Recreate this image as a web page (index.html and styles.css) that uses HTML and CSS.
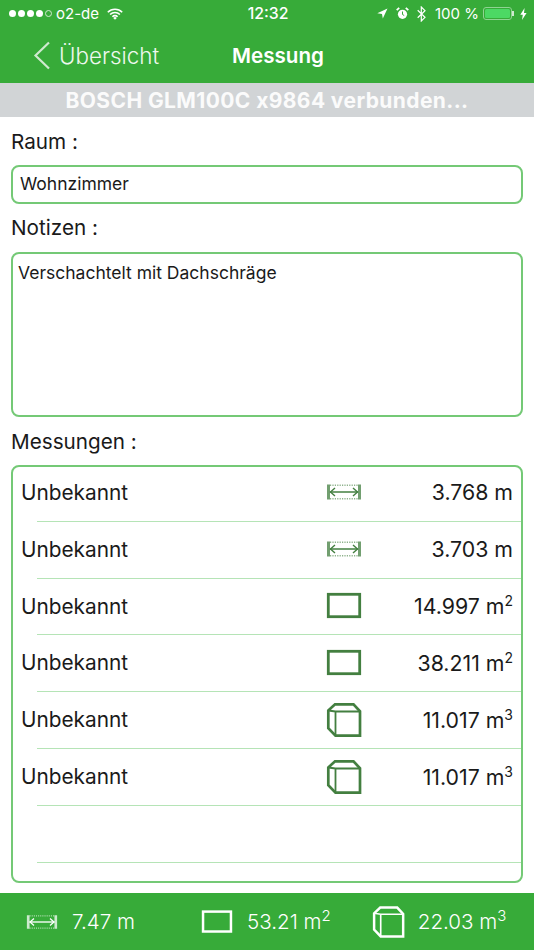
FILE: index.html
```
<!DOCTYPE html>
<html lang="de">
<head>
<meta charset="utf-8">
<title>Messung</title>
<link rel="stylesheet" href="styles.css">
</head>
<body>
<div class="app">
  <header class="top">
    <div class="status">
      <div class="st-left">
        <span class="dots"><i></i><i></i><i></i><i></i><i class="off"></i></span>
        <span class="carrier">o2-de</span>
        <svg class="wifi" width="16" height="12" viewBox="0 0 16 12"><path d="M.8 4.200a10.200 10.200 0 0 1 14.400 0M3.100 6.500a7 7 0 0 1 9.800 0M5.400 8.700a3.600 3.600 0 0 1 5.200 0" fill="none" stroke="#fff" stroke-width="1.600"/><path d="M8 11.800 6.200 10a2.500 2.500 0 0 1 3.600 0z" fill="#fff"/></svg>
      </div>
      <div class="st-time">12:32</div>
      <div class="st-right">
        <svg class="loc" width="11" height="11" viewBox="0 0 11 11"><path d="M10.500.5 5.800 10.500 5 6 .3 5.300z" fill="#fff"/></svg>
        <svg class="alarm" width="13" height="13" viewBox="0 0 13 13"><circle cx="6.500" cy="7.300" r="4.600" fill="#fff"/><path d="M6.500 4.500v3l1.700 1" fill="none" stroke="#37ab39" stroke-width="1"/><path d="M.7 3.200 3.200.9M12.300 3.200 9.800.9" stroke="#fff" stroke-width="1.800"/></svg>
        <svg class="bt" width="9" height="16" viewBox="0 0 9 16"><path d="M.7 4.300l7.300 7L4.300 15V1L8 4.700.7 11.700" fill="none" stroke="#fff" stroke-width="1.200"/></svg>
        <span class="pct">100 %</span>
        <span class="batt"><span class="batt-fill"></span></span>
        <svg class="bolt" width="7" height="12" viewBox="0 0 7 12"><path d="M4.600 0 .3 6.800h2.500L2 12l4.600-7H4z" fill="#fff"/></svg>
      </div>
    </div>
    <nav class="nav">
      <div class="back">
        <svg width="18" height="29" viewBox="0 0 18 29"><path d="M16 1.500 2.500 14.500 16 27.500" fill="none" stroke="#cfe9cf" stroke-width="2.200"/></svg>
        <span>Übersicht</span>
      </div>
      <div class="title">Messung</div>
    </nav>
  </header>
  <div class="banner">BOSCH GLM100C x9864 verbunden...</div>
  <main class="content">
    <div class="label l-raum">Raum :</div>
    <div class="field input">Wohnzimmer</div>
    <div class="label l-notes">Notizen :</div>
    <div class="field notes">Verschachtelt mit Dachschräge</div>
    <div class="label l-mess">Messungen :</div>
    <div class="list">
      <div class="row"><span class="name">Unbekannt</span><svg class="ic"><use href="#i-len"/></svg><span class="val">3.768 m</span></div>
      <div class="row"><span class="name">Unbekannt</span><svg class="ic"><use href="#i-len"/></svg><span class="val">3.703 m</span></div>
      <div class="row"><span class="name">Unbekannt</span><svg class="ic"><use href="#i-area"/></svg><span class="val">14.997 m<sup>2</sup></span></div>
      <div class="row"><span class="name">Unbekannt</span><svg class="ic"><use href="#i-area"/></svg><span class="val">38.211 m<sup>2</sup></span></div>
      <div class="row"><span class="name">Unbekannt</span><svg class="ic"><use href="#i-vol"/></svg><span class="val">11.017 m<sup>3</sup></span></div>
      <div class="row"><span class="name">Unbekannt</span><svg class="ic"><use href="#i-vol"/></svg><span class="val">11.017 m<sup>3</sup></span></div>
      <div class="row"></div>
    </div>
  </main>
  <footer class="foot">
    <div class="sum s1"><svg class="fic"><use href="#i-len"/></svg><span>7.47 m</span></div>
    <div class="sum s2"><svg class="fic"><use href="#i-area"/></svg><span>53.21 m<sup>2</sup></span></div>
    <div class="sum s3"><svg class="fic"><use href="#i-vol"/></svg><span>22.03 m<sup>3</sup></span></div>
  </footer>
</div>
<svg class="defs" width="0" height="0">
  <symbol id="i-len" viewBox="0 0 36 36">
    <g fill="none" stroke="currentColor">
      <path d="M2.500 10.500v15M33.500 10.500v15" stroke-width="3" opacity=".75"/>
      <path d="M4 18h28" stroke-width="1.500"/>
      <path d="M9 14 4.500 18 9 22M27 14 31.500 18 27 22" stroke-width="1.400"/>
      <path d="M4 11.200h28M4 24.800h28" stroke-width="1.400" stroke-dasharray="1.200 1.200" opacity=".6"/>
    </g>
  </symbol>
  <symbol id="i-area" viewBox="0 0 36 36">
    <rect x="2.300" y="6.300" width="31.400" height="22.400" fill="none" stroke="currentColor" stroke-width="2.800"/>
  </symbol>
  <symbol id="i-vol" viewBox="0 0 36 36">
    <g fill="none" stroke="currentColor" stroke-linejoin="miter">
      <path d="M2.300 8.500 9 2.300h18.500l6.500 7v24.400H9.500l-7.200-7.500z" stroke-width="2.700"/>
      <path d="M2.300 8.500 9.500 9.500H34M9.500 9.500v24.200" stroke-width="1.800"/>
    </g>
  </symbol>
</svg>
</body>
</html>
```
FILE: styles.css
```
* { box-sizing: border-box; }
html, body { margin: 0; padding: 0; }
body { width: 534px; height: 950px; background: #fff; color: #1a1a1a; font-family: Inter, "Liberation Sans", sans-serif; overflow: hidden; }
.app { width: 534px; height: 950px; display: flex; flex-direction: column; }
.defs { position: absolute; }

.top { height: 83px; background: #37ab39; color: #fff; flex: none; }
.status { height: 27px; display: grid; grid-template-columns: 1fr auto 1fr; align-items: center; padding: 0 7px 0 9px; font-size: 15px; }
.st-left { display: flex; align-items: center; gap: 4px; }
.dots { display: flex; gap: 2px; }
.dots i { width: 7px; height: 7px; border-radius: 50%; background: #fff; }
.dots i.off { background: none; border: 1px solid #cfe9cf; }
.wifi { margin-left: 4px; }
.carrier { font-weight: 400; }
.st-time { text-align: center; font-size: 15.800px; font-weight: 500; }
.st-right { display: flex; align-items: center; justify-content: flex-end; gap: 8px; }
.pct { margin-left: 1px; }
.batt { width: 29px; height: 13px; border: 1px solid #8fd392; border-radius: 3px; padding: 1px; position: relative; margin-left: -4px; }
.batt::after { content: ""; position: absolute; right: -3px; top: 3px; width: 2px; height: 5px; background: #cfe9cf; }
.batt-fill { display: block; height: 100%; border-radius: 1.500px; background: #4cd964; }

.nav { height: 56px; display: grid; grid-template-columns: 232px auto; align-items: center; }
.back { display: flex; align-items: center; gap: 8px; padding-left: 33px; font-size: 22.400px; font-weight: 300; color: #eef8ee; }
.title { font-size: 20.600px; font-weight: 600; }

.banner { height: 34px; flex: none; background: #d1d4d6; color: #fbfbfb; font-size: 21px; letter-spacing: .4px; font-weight: 700; line-height: 36px; text-align: center; white-space: nowrap; }

.content { flex: 1; padding: 0 11px; display: flex; flex-direction: column; }
.label { font-size: 20.700px; line-height: 24px; color: #1a1a1a; }
.l-raum { margin-top: 13px; }
.l-notes { margin-top: 12px; }
.l-mess { margin-top: 13px; }
.field { border: 2px solid #74c976; border-radius: 8px; background: #fff; font-size: 17.500px; }
.input { height: 39px; line-height: 34px; padding-left: 7px; margin-top: 11px; }
.notes { height: 165px; margin-top: 12px; padding: 8px 5px; line-height: 22px; }
.list { height: 418px; margin-top: 11px; border: 2px solid #74c976; border-radius: 8px; overflow: hidden; }
.row { height: 56.830px; margin-left: 24px; border-bottom: 1px solid #b5e4b6; display: grid; grid-template-columns: 289px 36px 1fr; align-items: center; padding: 0 8px 1px 0; font-size: 20.800px; }
.row:first-child { margin-top: -2px; }
.name { margin-left: -16px; }
.ic { width: 36px; height: 36px; color: #437f40; }
.val { text-align: right; white-space: nowrap; font-size: 21.300px; }
sup { font-size: 14px; line-height: 0; vertical-align: 8px; }

.foot { height: 57px; flex: none; background: #37ab39; color: #fff; display: flex; align-items: center; font-size: 20.600px; font-weight: 300; }
.foot sup { font-size: 15px; }
.sum { display: flex; align-items: center; gap: 14px; }
.s1 { margin-left: 26px; }
.s2 { margin-left: 66px; }
.s3 { margin-left: 41px; }
.s3 span { margin-left: -1px; }
.fic { width: 32px; height: 36px; }
.s3 .fic { width: 33px; }
```
